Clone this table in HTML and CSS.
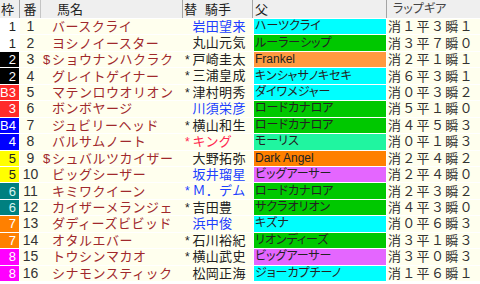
FILE: index.html
```html
<!DOCTYPE html>
<html lang="ja">
<head>
<meta charset="utf-8">
<title>出馬表</title>
<link rel="stylesheet" href="styles.css">
</head>
<body>
<div class="table">
  <div class="row head">
    <div class="c h-waku">枠</div>
    <div class="c h-num">番</div>
    <div class="c h-name">馬名</div>
    <div class="c h-jockey"><span>替</span><span class="h-gap">騎手</span></div>
    <div class="c h-sire">父</div>
    <div class="c h-rap">ラップギア</div>
  </div>

  <div class="row"><div class="c waku w1">1</div><div class="c num">1</div><div class="c name"><span class="mark"></span>バースクライ</div><div class="jockey blue"><span class="mark"></span>岩田望来</div><div class="c sire cyan">ハーツクライ</div><div class="c rap">消１平３瞬１</div></div>
  <div class="row"><div class="c waku w1">1</div><div class="c num">2</div><div class="c name"><span class="mark"></span>ヨシノイースター</div><div class="jockey"><span class="mark"></span>丸山元気</div><div class="c sire green">ルーラーシップ</div><div class="c rap">消３平７瞬０</div></div>
  <div class="row"><div class="c waku w2">2</div><div class="c num">3</div><div class="c name"><span class="mark">$</span>ショウナンハクラク</div><div class="jockey"><span class="mark">*</span>戸崎圭太</div><div class="c sire orange">Frankel</div><div class="c rap">消２平１瞬１</div></div>
  <div class="row"><div class="c waku w2">2</div><div class="c num">4</div><div class="c name"><span class="mark"></span>グレイトゲイナー</div><div class="jockey"><span class="mark">*</span>三浦皇成</div><div class="c sire cyan">キンシャサノキセキ</div><div class="c rap">消６平３瞬１</div></div>
  <div class="row"><div class="c waku w3">B3</div><div class="c num">5</div><div class="c name"><span class="mark"></span>マテンロウオリオン</div><div class="jockey"><span class="mark">*</span>津村明秀</div><div class="c sire cyan">ダイワメジャー</div><div class="c rap">消０平３瞬２</div></div>
  <div class="row"><div class="c waku w3">3</div><div class="c num">6</div><div class="c name"><span class="mark"></span>ボンボヤージ</div><div class="jockey blue"><span class="mark"></span>川須栄彦</div><div class="c sire green">ロードカナロア</div><div class="c rap">消５平１瞬０</div></div>
  <div class="row"><div class="c waku w4">B4</div><div class="c num">7</div><div class="c name"><span class="mark"></span>ジュビリーヘッド</div><div class="jockey"><span class="mark">*</span>横山和生</div><div class="c sire green">ロードカナロア</div><div class="c rap">消４平５瞬３</div></div>
  <div class="row"><div class="c waku w4">4</div><div class="c num">8</div><div class="c name"><span class="mark"></span>バルサムノート</div><div class="jockey red"><span class="mark">*</span>キング</div><div class="c sire mint">モーリス</div><div class="c rap">消０平１瞬３</div></div>
  <div class="row"><div class="c waku w5">5</div><div class="c num">9</div><div class="c name"><span class="mark">$</span>シュバルツカイザー</div><div class="jockey"><span class="mark"></span>大野拓弥</div><div class="c sire dark-orange">Dark Angel</div><div class="c rap">消２平４瞬２</div></div>
  <div class="row"><div class="c waku w5">5</div><div class="c num">10</div><div class="c name"><span class="mark"></span>ビッグシーザー</div><div class="jockey blue"><span class="mark"></span>坂井瑠星</div><div class="c sire violet">ビッグアーサー</div><div class="c rap">消２平４瞬０</div></div>
  <div class="row"><div class="c waku w6">6</div><div class="c num">11</div><div class="c name"><span class="mark"></span>キミワクイーン</div><div class="jockey blue"><span class="mark">*</span>Ｍ．デムーロ</div><div class="c sire green">ロードカナロア</div><div class="c rap">消２平３瞬２</div></div>
  <div class="row"><div class="c waku w6">6</div><div class="c num">12</div><div class="c name"><span class="mark"></span>カイザーメランジェ</div><div class="jockey"><span class="mark">*</span>吉田豊</div><div class="c sire green">サクラオリオン</div><div class="c rap">消４平３瞬０</div></div>
  <div class="row"><div class="c waku w7">7</div><div class="c num">13</div><div class="c name"><span class="mark"></span>ダディーズビビッド</div><div class="jockey blue"><span class="mark"></span>浜中俊</div><div class="c sire cyan">キズナ</div><div class="c rap">消０平６瞬３</div></div>
  <div class="row"><div class="c waku w7">7</div><div class="c num">14</div><div class="c name"><span class="mark"></span>オタルエバー</div><div class="jockey"><span class="mark">*</span>石川裕紀人</div><div class="c sire green">リオンディーズ</div><div class="c rap">消３平１瞬３</div></div>
  <div class="row"><div class="c waku w8">8</div><div class="c num">15</div><div class="c name"><span class="mark"></span>トウシンマカオ</div><div class="jockey"><span class="mark">*</span>横山武史</div><div class="c sire violet">ビッグアーサー</div><div class="c rap">消３平０瞬３</div></div>
  <div class="row"><div class="c waku w8">8</div><div class="c num">16</div><div class="c name"><span class="mark"></span>シナモンスティック</div><div class="jockey"><span class="mark"></span>松岡正海</div><div class="c sire cyan">ジョーカプチーノ</div><div class="c rap">消１平６瞬１</div></div>
</div>
</body>
</html>
```

FILE: styles.css
```css
* { box-sizing: border-box; }

html, body {
  margin: 0;
  padding: 0;
  background: #ffffff;
}

body {
  width: 480px;
  height: 284px;
  overflow: hidden;
  font-family: "Liberation Sans", "Noto Sans CJK JP", sans-serif;
  font-size: 13px;
  color: #222;
}

.table {
  display: flex;
  flex-direction: column;
  gap: 1px;
  background: #ffffff;
}

.row {
  display: grid;
  grid-template-columns: 20px 21px 142px 70px 134px 93px;
  height: 15.45px;
  line-height: 15px;
  background: #ffffee;
}

.row.head {
  height: 18px;
  line-height: 17px;
  background: #efefef;
}

.c {
  display: flex;
  align-items: center;
  white-space: nowrap;
  min-width: 0;
}

/* header */
.h-waku { padding-left: 1px; border-right: 1px solid #a4a4a4; }
.h-num { justify-content: center; border-right: 1px solid #c4c4c4; }
.h-name { padding-left: 16px; border-right: 1px solid #a4a4a4; }
.h-jockey { padding-left: 1px; border-right: 1px solid #a4a4a4; }
.h-gap { margin-left: 8px; }
.h-sire { padding-left: 2px; border-right: 1px solid #a4a4a4; }
.h-rap {
  padding-left: 6px;
  font-size: 12px;
  color: #444;
  font-feature-settings: "palt";
}

/* body cells */
.waku {
  justify-content: flex-end;
  padding-right: 3px;
  border-right: 1px solid #ffffff;
  font-size: 13px;
  color: #ffffff;
}
.w1 { background: #ffffff; color: #222; }
.w2 { background: #000000; }
.w3 { background: #ff2a2a; }
.w4 { background: #0000ff; }
.w5 { background: #ffff00; color: #222; }
.w6 { background: #008080; color: #d8f4f0; }
.w7 { background: #ff8000; }
.w8 { background: #ff00ff; }

.num {
  justify-content: center;
  font-size: 14px;
  color: #333;
}

.name {
  padding-left: 2px;
  color: #a0282c;
  letter-spacing: 0.5px;
}
.name .mark {
  display: inline-block;
  width: 9px;
  letter-spacing: 0;
}

/* jockey: characters that do not fit wrap onto a hidden second line */
.jockey {
  display: block;
  min-width: 0;
  height: 15.45px;
  line-height: 15.45px;
  padding-left: 2px;
  overflow: hidden;
  white-space: normal;
  word-break: break-all;
  color: #222;
  letter-spacing: 0.3px;
}
.jockey .mark {
  display: inline-block;
  width: 7.5px;
  font-size: 12px;
  letter-spacing: 0;
}
.jockey.blue { color: #2040ff; }
.jockey.red { color: #ff2850; }

.sire {
  padding-left: 1px;
  border-left: 1px solid #ffffff;
  border-right: 1px solid #ffffff;
  font-size: 12px;
  color: #222;
  font-feature-settings: "palt";
}
.cyan { background: #00ffff; }
.green { background: #00c800; }
.orange { background: #ff9a40; }
.dark-orange { background: #ff8000; }
.mint { background: #20f5a0; }
.violet { background: #e466ff; }

.rap {
  padding-left: 1px;
  color: #333;
  letter-spacing: 1.3px;
}
```
